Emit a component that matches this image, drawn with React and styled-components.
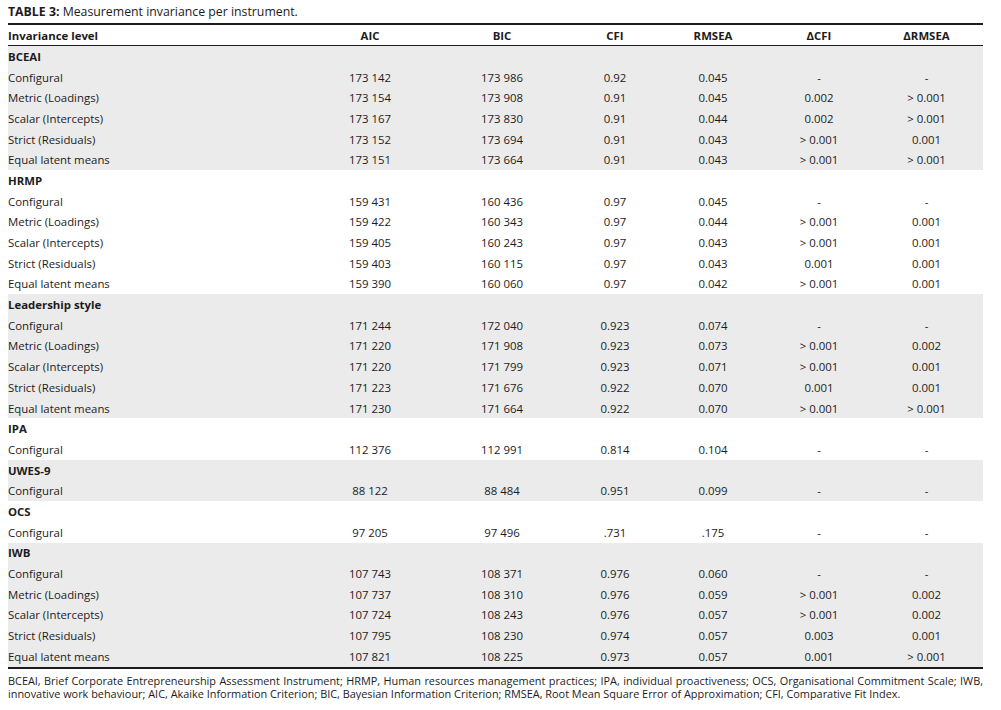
import React from 'react';
import styled, { createGlobalStyle } from 'styled-components';

const GlobalStyle = createGlobalStyle`
  html, body {
    margin: 0;
    padding: 0;
    background: #ffffff;
  }
  body {
    font-family: "Open Sans", "Liberation Sans", sans-serif;
    color: #1d1b1c;
  }
`;

const COLS = '300px 124px 140px 86px 110px 102px 113px';

const Page = styled.div`
  width: 975px;
  padding: 4px 18px 0 8px;
`;

const Caption = styled.div`
  font-size: 12.3px;
  line-height: 16px;
  height: 19px;

  b {
    font-weight: 700;
  }
`;

const Table = styled.div`
  border-top: 2px solid #1d1b1c;
  border-bottom: 2px solid #1d1b1c;
`;

const Row = styled.div`
  display: grid;
  grid-template-columns: ${COLS};
  align-items: center;
  height: ${(p) => (p.$head ? '20px' : '20.69px')};
  font-size: 11.4px;
  background: ${(p) => (p.$shade ? '#ebebeb' : 'transparent')};
  border-bottom: ${(p) => (p.$head ? '1px solid #1d1b1c' : 'none')};
  font-weight: ${(p) => (p.$bold ? 700 : 400)};
`;

const Cell = styled.div`
  text-align: ${(p) => (p.$left ? 'left' : 'center')};
  white-space: nowrap;
`;

const Note = styled.p`
  margin: 5px 0 0;
  font-size: 10.9px;
  line-height: 13px;
  text-align: justify;
`;

const HEAD = ['Invariance level', 'AIC', 'BIC', 'CFI', 'RMSEA', 'ΔCFI', 'ΔRMSEA'];

const full = (r) => [
  ['Configural', ...r[0]],
  ['Metric (Loadings)', ...r[1]],
  ['Scalar (Intercepts)', ...r[2]],
  ['Strict (Residuals)', ...r[3]],
  ['Equal latent means', ...r[4]],
];

const GROUPS = [
  {
    name: 'BCEAI',
    rows: full([
      ['173 142', '173 986', '0.92', '0.045', '-', '-'],
      ['173 154', '173 908', '0.91', '0.045', '0.002', '> 0.001'],
      ['173 167', '173 830', '0.91', '0.044', '0.002', '> 0.001'],
      ['173 152', '173 694', '0.91', '0.043', '> 0.001', '0.001'],
      ['173 151', '173 664', '0.91', '0.043', '> 0.001', '> 0.001'],
    ]),
  },
  {
    name: 'HRMP',
    rows: full([
      ['159 431', '160 436', '0.97', '0.045', '-', '-'],
      ['159 422', '160 343', '0.97', '0.044', '> 0.001', '0.001'],
      ['159 405', '160 243', '0.97', '0.043', '> 0.001', '0.001'],
      ['159 403', '160 115', '0.97', '0.043', '0.001', '0.001'],
      ['159 390', '160 060', '0.97', '0.042', '> 0.001', '0.001'],
    ]),
  },
  {
    name: 'Leadership style',
    rows: full([
      ['171 244', '172 040', '0.923', '0.074', '-', '-'],
      ['171 220', '171 908', '0.923', '0.073', '> 0.001', '0.002'],
      ['171 220', '171 799', '0.923', '0.071', '> 0.001', '0.001'],
      ['171 223', '171 676', '0.922', '0.070', '0.001', '0.001'],
      ['171 230', '171 664', '0.922', '0.070', '> 0.001', '> 0.001'],
    ]),
  },
  {
    name: 'IPA',
    rows: [['Configural', '112 376', '112 991', '0.814', '0.104', '-', '-']],
  },
  {
    name: 'UWES-9',
    rows: [['Configural', '88 122', '88 484', '0.951', '0.099', '-', '-']],
  },
  {
    name: 'OCS',
    rows: [['Configural', '97 205', '97 496', '.731', '.175', '-', '-']],
  },
  {
    name: 'IWB',
    rows: full([
      ['107 743', '108 371', '0.976', '0.060', '-', '-'],
      ['107 737', '108 310', '0.976', '0.059', '> 0.001', '0.002'],
      ['107 724', '108 243', '0.976', '0.057', '> 0.001', '0.002'],
      ['107 795', '108 230', '0.974', '0.057', '0.003', '0.001'],
      ['107 821', '108 225', '0.973', '0.057', '0.001', '> 0.001'],
    ]),
  },
];

export default function App() {
  return (
    <Page>
      <GlobalStyle />
      <Caption>
        <b>TABLE 3:</b> Measurement invariance per instrument.
      </Caption>
      <Table>
        <Row $head $bold>
          {HEAD.map((h, i) => (
            <Cell key={h} $left={i === 0}>{h}</Cell>
          ))}
        </Row>
        {GROUPS.map((g, gi) => (
          <React.Fragment key={g.name}>
            <Row $shade={gi % 2 === 0} $bold>
              <Cell $left>{g.name}</Cell>
            </Row>
            {g.rows.map((r, ri) => (
              <Row key={ri} $shade={gi % 2 === 0}>
                {r.map((v, ci) => (
                  <Cell key={ci} $left={ci === 0}>{v}</Cell>
                ))}
              </Row>
            ))}
          </React.Fragment>
        ))}
      </Table>
      <Note>
        BCEAI, Brief Corporate Entrepreneurship Assessment Instrument; HRMP, Human resources management
        practices; IPA, individual proactiveness; OCS, Organisational Commitment Scale; IWB, innovative work
        behaviour; AIC, Akaike Information Criterion; BIC, Bayesian Information Criterion; RMSEA, Root Mean
        Square Error of Approximation; CFI, Comparative Fit Index.
      </Note>
    </Page>
  );
}
